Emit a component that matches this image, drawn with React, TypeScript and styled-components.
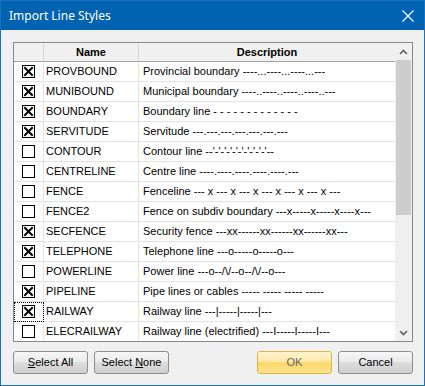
import * as React from 'react';
import styled, { createGlobalStyle } from 'styled-components';

const GlobalStyle = createGlobalStyle`
  html, body {
    margin: 0;
    padding: 0;
    background: #f0f0f0;
  }
`;

interface LineStyle {
  name: string;
  description: string;
  checked: boolean;
}

const lineStyles: LineStyle[] = [
  { name: 'PROVBOUND', description: 'Provincial boundary ----...----...----...---', checked: true },
  { name: 'MUNIBOUND', description: 'Municipal boundary ----..----..----..----..---', checked: true },
  { name: 'BOUNDARY', description: 'Boundary line - - - - - - - - - - - - -', checked: true },
  { name: 'SERVITUDE', description: 'Servitude ---.---.---.---.---.---.---', checked: true },
  { name: 'CONTOUR', description: "Contour line  --'-'-'-'-'-'-'-'-'-'--", checked: false },
  { name: 'CENTRELINE', description: 'Centre line ----.----.----.----.----.---', checked: false },
  { name: 'FENCE', description: 'Fenceline --- x --- x --- x --- x --- x --- x ---', checked: false },
  { name: 'FENCE2', description: 'Fence on subdiv boundary ---x-----x-----x----x---', checked: false },
  { name: 'SECFENCE', description: 'Security fence ---xx------xx------xx------xx---', checked: true },
  { name: 'TELEPHONE', description: 'Telephone line ---o-----o-----o---', checked: true },
  { name: 'POWERLINE', description: 'Power line ---o--/\\/--o--/\\/--o---', checked: false },
  { name: 'PIPELINE', description: 'Pipe lines or cables ----- ----- ----- -----', checked: true },
  { name: 'RAILWAY', description: 'Railway line ---|-----|-----|---', checked: true },
  { name: 'ELECRAILWAY', description: 'Railway line (electrified) ---I-----I-----I---', checked: false },
];

const CheckBox: React.FC<{ checked: boolean }> = ({ checked }) => (
  <svg width="13" height="13" viewBox="0 0 13 13">
    <rect x="0.5" y="0.5" width="12" height="12" fill="#fff" stroke="#000" />
    {checked && (
      <path d="M3 3 L10 10 M10 3 L3 10" stroke="#000" strokeWidth="2" strokeLinecap="square" />
    )}
  </svg>
);

const Chevron: React.FC<{ up?: boolean }> = ({ up }) => (
  <svg width="9" height="6" viewBox="0 0 9 6">
    <path
      d={up ? 'M1 5 L4.5 1.5 L8 5' : 'M1 1 L4.5 4.5 L8 1'}
      stroke="#606060"
      strokeWidth="1.6"
      fill="none"
    />
  </svg>
);

export default function App() {
  const [items, setItems] = React.useState(lineStyles);
  const focused = 12;

  const toggle = (i: number) =>
    setItems((prev) => prev.map((it, j) => (j === i ? { ...it, checked: !it.checked } : it)));

  return (
    <>
      <GlobalStyle />
      <Window>
        <TitleBar>
          <Title>Import Line Styles</Title>
          <CloseIcon width="12" height="12" viewBox="0 0 12 12">
            <path d="M0.5 0.5 L11.5 11.5 M11.5 0.5 L0.5 11.5" stroke="#fff" strokeWidth="1.1" />
          </CloseIcon>
        </TitleBar>
        <Body>
          <GridFrame>
            <Table>
              <HeaderCell />
              <HeaderCell>Name</HeaderCell>
              <HeaderCell>Description</HeaderCell>
              {items.map((it, i) => (
                <React.Fragment key={it.name}>
                  <CheckCell $focused={i === focused} onClick={() => toggle(i)}>
                    <CheckBox checked={it.checked} />
                  </CheckCell>
                  <Cell>{it.name}</Cell>
                  <Cell>{it.description}</Cell>
                </React.Fragment>
              ))}
            </Table>
            <ScrollBar>
              <ArrowButton>
                <Chevron up />
              </ArrowButton>
              <Track>
                <Thumb />
              </Track>
              <ArrowButton>
                <Chevron />
              </ArrowButton>
            </ScrollBar>
          </GridFrame>
          <Footer>
            <ButtonGroup>
              <Button>
                <u>S</u>elect All
              </Button>
              <Button>
                Select <u>N</u>one
              </Button>
            </ButtonGroup>
            <ButtonGroup>
              <Button $primary>OK</Button>
              <Button>Cancel</Button>
            </ButtonGroup>
          </Footer>
        </Body>
      </Window>
    </>
  );
}

const Window = styled.div`
  width: 425px;
  height: 386px;
  box-sizing: border-box;
  border: 1px solid #1a6fc4;
  background: #f0f0f0;
  display: flex;
  flex-direction: column;
  font-family: 'Liberation Sans', Arial, sans-serif;
  font-size: 11px;
  color: #000;
`;

const TitleBar = styled.div`
  height: 30px;
  background: #0063b1;
  display: flex;
  align-items: center;
  padding: 0 10px 0 8px;
`;

const Title = styled.div`
  flex: 1;
  color: #fff;
  font-family: 'Noto Sans', 'Open Sans', sans-serif;
  font-size: 12px;
  padding-bottom: 1px;
`;

const CloseIcon = styled.svg`
  display: block;
`;

const Body = styled.div`
  flex: 1;
  display: flex;
  flex-direction: column;
  padding: 12px 11px 11px 12px;
`;

const GridFrame = styled.div`
  height: 300px;
  box-sizing: border-box;
  border: 1px solid #828790;
  background: #fff;
  display: flex;
  overflow: hidden;
`;

const Table = styled.div`
  flex: 1;
  display: grid;
  grid-template-columns: 30px 95px 1fr;
  grid-auto-rows: 20px;
  grid-template-rows: 19px;
  align-content: start;
`;

const HeaderCell = styled.div`
  box-sizing: border-box;
  background: #f0f0f0;
  border-right: 1px solid #d5d5d5;
  border-bottom: 1px solid #a0a0a0;
  font-weight: bold;
  display: flex;
  align-items: center;
  justify-content: center;
  padding-bottom: 1px;

  &:nth-child(3) {
    border-right: none;
  }
`;

const Cell = styled.div`
  box-sizing: border-box;
  border-right: 1px solid #e3e3e3;
  border-bottom: 1px solid #e3e3e3;
  display: flex;
  align-items: center;
  padding: 0 0 1px 2px;
  white-space: nowrap;
  overflow: hidden;

  &:nth-child(3n) {
    border-right: none;
    padding-left: 4px;
  }
`;

const CheckCell = styled.div<{ $focused?: boolean }>`
  box-sizing: border-box;
  border-right: 1px solid #e3e3e3;
  border-bottom: 1px solid #e3e3e3;
  display: flex;
  align-items: center;
  justify-content: center;
  padding-bottom: 1px;
  cursor: pointer;
  outline: ${(p) => (p.$focused ? '1px dotted #000' : 'none')};
  outline-offset: -1px;

  svg {
    display: block;
  }
`;

const ScrollBar = styled.div`
  width: 17px;
  background: #f0f0f0;
  display: flex;
  flex-direction: column;
`;

const ArrowButton = styled.div`
  height: 17px;
  display: flex;
  align-items: center;
  justify-content: center;
`;

const Track = styled.div`
  flex: 1;
  padding: 0 1px;
`;

const Thumb = styled.div`
  height: 155px;
  background: #cdcdcd;
`;

const Footer = styled.div`
  display: flex;
  justify-content: space-between;
  padding-top: 9px;
`;

const ButtonGroup = styled.div`
  display: flex;
  gap: 6px;
`;

const Button = styled.button<{ $primary?: boolean }>`
  width: 75px;
  height: 23px;
  box-sizing: border-box;
  border-radius: 3px;
  border: 1px solid ${(p) => (p.$primary ? '#dcb64a' : '#8e8f8f')};
  background: ${(p) =>
    p.$primary
      ? 'linear-gradient(#fef4d0 0%, #fde9a8 45%, #fbd76c 50%, #fce28c 100%)'
      : 'linear-gradient(#f7f7f7 0%, #ebebeb 45%, #dddddd 50%, #cfcfcf 100%)'};
  color: ${(p) => (p.$primary ? '#666' : '#000')};
  font-family: 'Liberation Sans', Arial, sans-serif;
  font-size: 11px;
  padding: 0 0 1px;
  margin: 0;

  u {
    text-decoration: underline;
  }
`;
